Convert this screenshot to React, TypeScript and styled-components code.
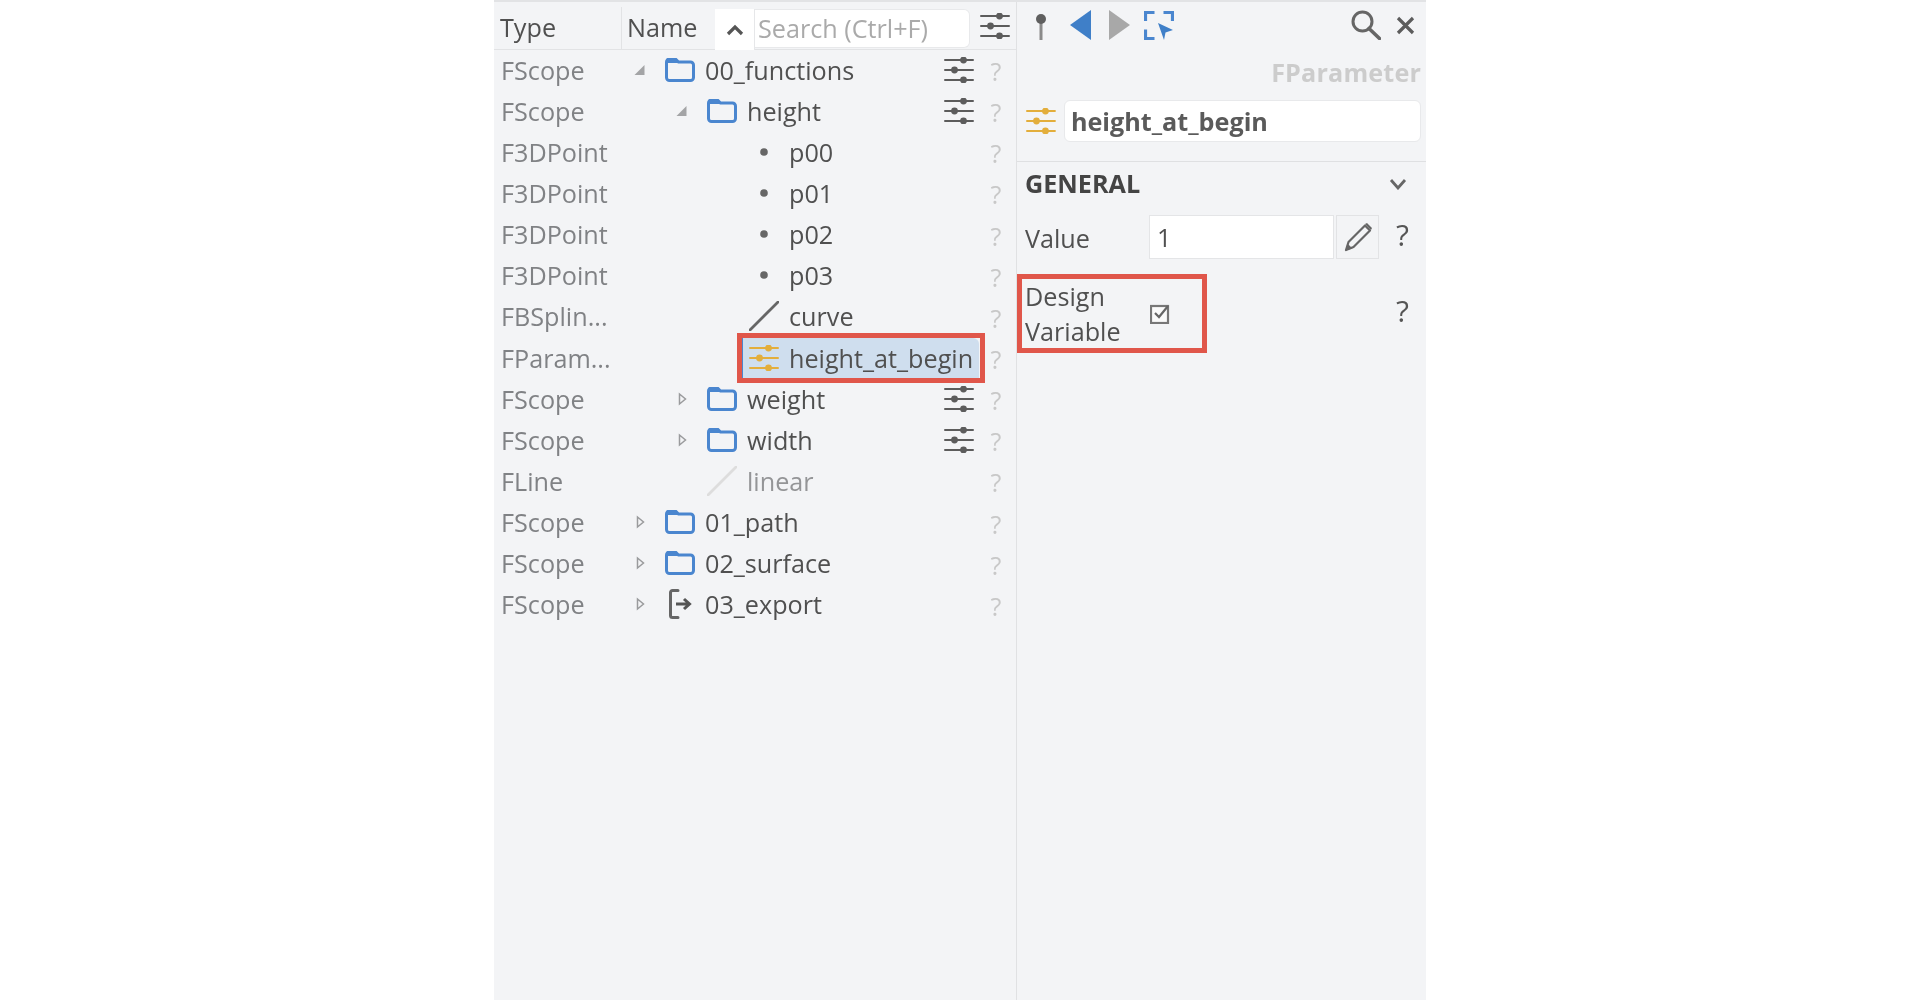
import styled, { createGlobalStyle } from "styled-components";

const GlobalStyle = createGlobalStyle`
  html, body {
    margin: 0;
    background: #ffffff;
    font-family: "Open Sans", "Noto Sans", sans-serif;
  }
  * {
    box-sizing: border-box;
  }
`;

const Page = styled.main`
  display: flex;
  justify-content: center;
  height: 1000px;
  overflow: hidden;
`;
/* the source capture is a soft upscale, hence the small blur */
const Window = styled.div`
  display: flex;
  width: 932px;
  background: #f3f4f6;
  border-top: 2px solid #e2e3e5;
  font-size: 25.2px;
  color: #505050;
  filter: blur(0.4px);
`;

/* tree */
const TreePanel = styled.section`
  width: 523px;
  flex: none;
  border-right: 1px solid #e0e1e3;
`;
const TreeHeader = styled.header`
  display: flex;
  height: 48px;
  margin-bottom: -1px;
  border-bottom: 1px solid #e2e3e5;
`;
const TypeHead = styled.div`
  width: 128px;
  margin-top: 5px;
  padding-left: 6px;
  line-height: 40px;
  border-right: 1px solid #e2e3e5;
`;
const NameHead = styled.div`
  width: 93px;
  margin-top: 5px;
  padding-left: 5px;
  line-height: 40px;
`;
const SortButton = styled.div`
  display: flex;
  align-items: center;
  justify-content: center;
  width: 40px;
  margin-top: 7px;
  height: 41px;
  background: #ffffff;
  border-right: 1px solid #e6e7e9;
`;
const SearchInput = styled.input`
  width: 215px;
  margin-top: 7px;
  height: 39px;
  padding: 0 0 2px 3px;
  border: 1px solid #e8e9eb;
  border-left: 0;
  border-radius: 0 6px 6px 0;
  background: #ffffff;
  font: inherit;
  outline: none;
  &::placeholder {
    color: #aaaaaa;
    opacity: 1;
  }
`;
const HeadTool = styled.div`
  display: flex;
  align-items: center;
  margin-left: 10px;
`;
const TreeRow = styled.div`
  display: flex;
  align-items: center;
  height: 41.15px;
`;
const TypeCell = styled.div`
  width: 127px;
  flex: none;
  padding-left: 7px;
  color: #808285;
  white-space: nowrap;
`;
const NameCell = styled.div<{ $depth: number }>`
  display: flex;
  align-items: center;
  flex: 1;
  min-width: 0;
  padding-left: ${(p) => 12 + p.$depth * 42}px;
  white-space: nowrap;
`;
const Twisty = styled.span`
  display: flex;
  align-items: center;
  width: 32px;
  flex: none;
`;
const IconSlot = styled.span`
  display: flex;
  align-items: center;
  width: 40px;
  height: 30px;
  flex: none;
`;
const NameText = styled.span<{ $muted?: boolean }>`
  color: ${(p) => (p.$muted ? "#949597" : "#505050")};
`;
const Selected = styled.div`
  position: relative;
  display: flex;
  align-items: center;
  width: 237px;
  height: 40px;
  flex: none;
  margin-left: -7px;
  padding-left: 6px;
  background: #cfdeee;
  border-left: 1px solid #4a86cf;
  border-radius: 0 6px 0 0;
  &::after {
    content: "";
    position: absolute;
    inset: -5px -6px -5px -6px;
    border: 5px solid #e0564a;
  }
`;
const RowTool = styled.span`
  display: flex;
  width: 30px;
  flex: none;
`;
const RowHelp = styled.span`
  width: 42px;
  flex: none;
  padding: 3px 0 0 2px;
  text-align: center;
  color: #c8c8c8;
`;

/* details */
const DetailPanel = styled.section`
  flex: 1;
  min-width: 0;
`;
const Toolbar = styled.div`
  display: flex;
  align-items: flex-start;
  height: 48px;
  padding: 8px 11px 0 17px;
`;
const ToolIcon = styled.svg<{ $gap?: number; $push?: boolean }>`
  flex: none;
  margin-left: ${(p) => (p.$push ? "auto" : `${p.$gap ?? 0}px`)};
`;
const ClassLabel = styled.div`
  height: 46px;
  padding-right: 5px;
  line-height: 45px;
  text-align: right;
  font-weight: 700;
  letter-spacing: 0.15px;
  color: #cccccc;
`;
const NameRow = styled.div`
  display: flex;
  align-items: center;
  height: 42px;
  margin-top: 4px;
  padding: 0 5px 0 9px;
`;
const NameField = styled.div`
  display: flex;
  align-items: center;
  width: 358px;
  height: 42px;
  margin-left: 8px;
  padding-left: 6px;
  background: #ffffff;
  border: 1px solid #e8e9eb;
  border-radius: 6px;
  font-weight: 700;
  color: #5a5a5a;
`;
const SectionHead = styled.div`
  display: flex;
  align-items: center;
  justify-content: space-between;
  height: 43px;
  margin-top: 19px;
  padding: 0 19px 0 8px;
  border-top: 1px solid #dfe0e2;
  font-weight: 700;
  color: #444444;
`;
const ValueRow = styled.div`
  display: flex;
  align-items: center;
  margin-top: 11px;
`;
const ValueLabel = styled.div`
  width: 132px;
  flex: none;
  padding: 2px 0 0 8px;
`;
const ValueInput = styled.div`
  width: 185px;
  height: 44px;
  padding-left: 7px;
  line-height: 43px;
  background: #ffffff;
  border: 1px solid #e4e5e7;
`;
const PencilButton = styled.div`
  display: flex;
  align-items: center;
  justify-content: center;
  width: 43px;
  height: 44px;
  margin-left: 2px;
  border: 1px solid #e2e3e5;
`;
const Help = styled.div`
  width: 47px;
  margin-left: auto;
  margin-top: -6px;
  font-size: 30px;
  text-align: center;
  color: #555555;
`;
const DesignRow = styled.div`
  display: flex;
  align-items: center;
  margin-top: 15px;
`;
const MarkedBox = styled.div`
  display: flex;
  align-items: center;
  width: 190px;
  height: 79px;
  flex: none;
  padding-left: 3px;
  border: 5px solid #e0564a;
`;
const MarkedLabel = styled.div`
  width: 125px;
  flex: none;
  line-height: 35px;
`;

const Sliders = ({ color = "#5c5c5c" }: { color?: string }) => (
  <svg width="30" height="26" viewBox="0 0 30 26">
    <g stroke={color} strokeWidth="2" strokeLinecap="round">
      <path d="M1 3h28M1 13h28M1 23h28" />
    </g>
    <g fill={color}>
      <circle cx="19.5" cy="3" r="3.4" />
      <circle cx="10.5" cy="13" r="3.4" />
      <circle cx="19.5" cy="23" r="3.4" />
    </g>
  </svg>
);

const Folder = () => (
  <svg width="30" height="24" viewBox="0 0 30 24">
    <path
      d="M1.5 4a3 3 0 0 1 3-3h6l3 3h12a3 3 0 0 1 3 3v12.5a3 3 0 0 1-3 3h-21a3 3 0 0 1-3-3z"
      fill="none"
      stroke="#4a86cf"
      strokeWidth="3"
    />
    <path d="M2 1.5h9l3 3.5H2z" fill="#4a86cf" />
  </svg>
);

const Exit = () => (
  <svg width="30" height="30" viewBox="0 0 30 30">
    <path d="M13 1.5H7.5a2 2 0 0 0-2 2v23a2 2 0 0 0 2 2H13" fill="none" stroke="#666666" strokeWidth="3" strokeLinecap="round" />
    <path d="M11 15h13M19 10l5.5 5-5.5 5" fill="none" stroke="#555555" strokeWidth="3" />
  </svg>
);

const Dot = () => (
  <svg width="30" height="30" viewBox="0 0 30 30">
    <circle cx="15" cy="15" r="3.8" fill="#666666" />
  </svg>
);

const Stroke = ({ color }: { color: string }) => (
  <svg width="30" height="30" viewBox="0 0 30 30">
    <path d="M1 29L29 1" stroke={color} strokeWidth="2.8" strokeLinecap="round" />
  </svg>
);

const Expanded = () => (
  <svg width="14" height="12" viewBox="0 0 14 12">
    <path d="M11.5 1v10H1.5z" fill="#a3a4a6" />
  </svg>
);

const Collapsed = () => (
  <svg width="14" height="14" viewBox="0 0 14 14">
    <path d="M4.5 2v10l6-5z" fill="#f3f4f6" stroke="#9a9b9d" strokeWidth="1.5" />
  </svg>
);

type Item = {
  type: string;
  name: string;
  depth: number;
  arrow?: "open" | "closed";
  icon: "folder" | "dot" | "curve" | "line" | "exit" | "param";
  tool?: boolean;
  muted?: boolean;
  selected?: boolean;
};

const items: Item[] = [
  { type: "FScope", name: "00_functions", depth: 0, arrow: "open", icon: "folder", tool: true },
  { type: "FScope", name: "height", depth: 1, arrow: "open", icon: "folder", tool: true },
  { type: "F3DPoint", name: "p00", depth: 2, icon: "dot" },
  { type: "F3DPoint", name: "p01", depth: 2, icon: "dot" },
  { type: "F3DPoint", name: "p02", depth: 2, icon: "dot" },
  { type: "F3DPoint", name: "p03", depth: 2, icon: "dot" },
  { type: "FBSplin...", name: "curve", depth: 2, icon: "curve" },
  { type: "FParam...", name: "height_at_begin", depth: 2, icon: "param", selected: true },
  { type: "FScope", name: "weight", depth: 1, arrow: "closed", icon: "folder", tool: true },
  { type: "FScope", name: "width", depth: 1, arrow: "closed", icon: "folder", tool: true },
  { type: "FLine", name: "linear", depth: 1, icon: "line", muted: true },
  { type: "FScope", name: "01_path", depth: 0, arrow: "closed", icon: "folder" },
  { type: "FScope", name: "02_surface", depth: 0, arrow: "closed", icon: "folder" },
  { type: "FScope", name: "03_export", depth: 0, arrow: "closed", icon: "exit" },
];

const renderIcon = (icon: Item["icon"]) => {
  if (icon === "folder") return <Folder />;
  if (icon === "dot") return <Dot />;
  if (icon === "curve") return <Stroke color="#666666" />;
  if (icon === "line") return <Stroke color="#dddddd" />;
  if (icon === "exit") return <Exit />;
  return <Sliders color="#e3ae3c" />;
};

const App = () => {
  return (
    <Page>
      <GlobalStyle />
      <Window>
        <TreePanel>
          <TreeHeader>
            <TypeHead>Type</TypeHead>
            <NameHead>Name</NameHead>
            <SortButton>
              <svg width="18" height="12" viewBox="0 0 18 12">
                <path d="M2 10l7-7 7 7" fill="none" stroke="#555555" strokeWidth="3.2" />
              </svg>
            </SortButton>
            <SearchInput placeholder="Search (Ctrl+F)" readOnly />
            <HeadTool>
              <Sliders />
            </HeadTool>
          </TreeHeader>
          {items.map((item) => (
            <TreeRow key={item.name}>
              <TypeCell>{item.type}</TypeCell>
              <NameCell $depth={item.depth}>
                <Twisty>
                  {item.arrow === "open" && <Expanded />}
                  {item.arrow === "closed" && <Collapsed />}
                </Twisty>
                {item.selected ? (
                  <Selected>
                    <IconSlot>{renderIcon(item.icon)}</IconSlot>
                    <NameText>{item.name}</NameText>
                  </Selected>
                ) : (
                  <>
                    <IconSlot>{renderIcon(item.icon)}</IconSlot>
                    <NameText $muted={item.muted}>{item.name}</NameText>
                  </>
                )}
              </NameCell>
              {item.tool && (
                <RowTool>
                  <Sliders />
                </RowTool>
              )}
              <RowHelp>?</RowHelp>
            </TreeRow>
          ))}
        </TreePanel>

        <DetailPanel>
          <Toolbar>
            <ToolIcon width="14" height="30" viewBox="0 0 14 30">
              <path d="M7 8v22" stroke="#8a8a8a" strokeWidth="3" />
              <circle cx="7" cy="9" r="5" fill="#5f5f5f" />
            </ToolIcon>
            <ToolIcon $gap={22} width="21" height="30" viewBox="0 0 21 30">
              <path d="M21 0v30L0 15z" fill="#3f7fc8" />
            </ToolIcon>
            <ToolIcon $gap={18} width="21" height="30" viewBox="0 0 21 30">
              <path d="M0 0v30l21-15z" fill="#a8a8a8" />
            </ToolIcon>
            <ToolIcon $gap={14} width="30" height="30" viewBox="0 0 30 30">
              <path d="M1.5 11V2.5h9M19.5 2.5h9V11M1.5 19.5v9h9" fill="none" stroke="#4a86cf" strokeWidth="3.2" />
              <path d="M14 13l15 7-7.5 2.5L20 30z" fill="#3f7fc8" />
            </ToolIcon>
            <ToolIcon $push width="30" height="30" viewBox="0 0 30 30">
              <circle cx="11.5" cy="11.5" r="9.5" fill="none" stroke="#666666" strokeWidth="3" />
              <path d="M18 18.5L28.5 28.5" stroke="#666666" strokeWidth="3.6" strokeLinecap="round" />
            </ToolIcon>
            <ToolIcon $gap={15} width="19" height="30" viewBox="0 0 19 30">
              <path d="M2 8l15 15M17 8L2 23" stroke="#5c5c5c" strokeWidth="3.2" />
            </ToolIcon>
          </Toolbar>
          <ClassLabel>FParameter</ClassLabel>
          <NameRow>
            <Sliders color="#e3ae3c" />
            <NameField>height_at_begin</NameField>
          </NameRow>
          <SectionHead>
            GENERAL
            <svg width="18" height="14" viewBox="0 0 18 14">
              <path d="M2 4l7 8 7-8" fill="none" stroke="#666666" strokeWidth="2.8" />
            </svg>
          </SectionHead>
          <ValueRow>
            <ValueLabel>Value</ValueLabel>
            <ValueInput>1</ValueInput>
            <PencilButton>
              <svg width="32" height="32" viewBox="0 0 32 32">
                <path d="M4 29l2.5-8L23 4.5l5 5L11.5 26z" fill="none" stroke="#666666" strokeWidth="2.2" strokeLinejoin="round" />
                <path d="M3.5 29.5l2-7 5 5zM23 3l6 6 1-2-5-5z" fill="#666666" />
              </svg>
            </PencilButton>
            <Help>?</Help>
          </ValueRow>
          <DesignRow>
            <MarkedBox>
              <MarkedLabel>
                Design
                <br />
                Variable
              </MarkedLabel>
              <svg width="21" height="21" viewBox="0 0 21 21">
                <rect x="1" y="3" width="17" height="17" fill="#fafafa" stroke="#777777" strokeWidth="2.2" />
                <path d="M5 10l4 4 9-11" fill="none" stroke="#666666" strokeWidth="2.2" />
              </svg>
            </MarkedBox>
            <Help>?</Help>
          </DesignRow>
        </DetailPanel>
      </Window>
    </Page>
  );
};

export default App;
